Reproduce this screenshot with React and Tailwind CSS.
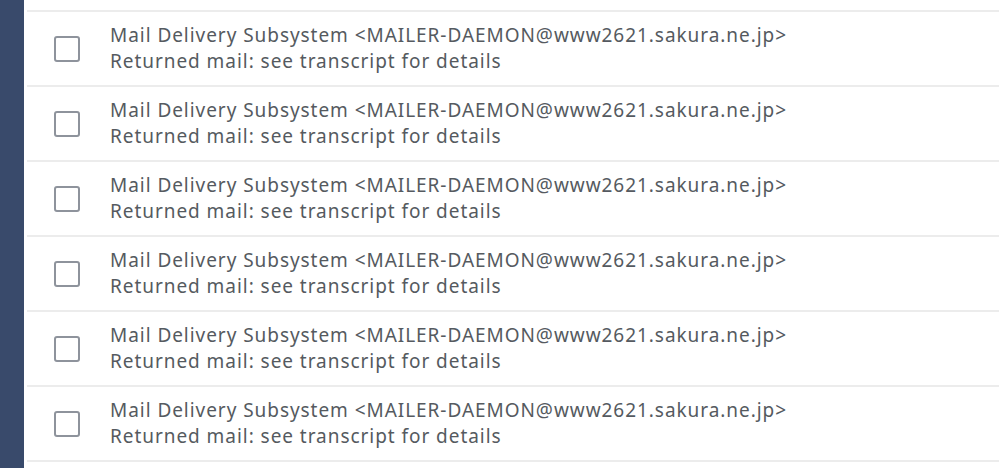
import React from 'react';

const mails = Array.from({ length: 6 }, (_, i) => ({
  id: i,
  from: 'Mail Delivery Subsystem <MAILER-DAEMON@www2621.sakura.ne.jp>',
  subject: 'Returned mail: see transcript for details',
}));

function MailRow({ mail }) {
  return (
    <div className="h-[75px] border-t-2 border-[#ececec] flex items-center pl-[27px]">
      <div className="w-[26px] h-[26px] rounded-[3px] border-2 border-[#8e939c] bg-white shrink-0" />
      <div className="pl-[30px] text-[#555a60] text-[19px] leading-[26px] tracking-[0.95px] -mt-[1px]">
        <div>{mail.from}</div>
        <div>{mail.subject}</div>
      </div>
    </div>
  );
}

export default function App() {
  return (
    <div
      className="h-[468px] w-[999px] flex bg-white overflow-hidden"
      style={{ fontFamily: '"Noto Sans", "Noto Sans CJK JP", sans-serif' }}
    >
      <div className="w-[24px] bg-[#394a6b] shrink-0" />
      <div className="flex-1 ml-[3px]">
        <div className="h-[10px]" />
        {mails.map((m) => (
          <MailRow key={m.id} mail={m} />
        ))}
        <div className="border-t-2 border-[#ececec]" />
      </div>
    </div>
  );
}
